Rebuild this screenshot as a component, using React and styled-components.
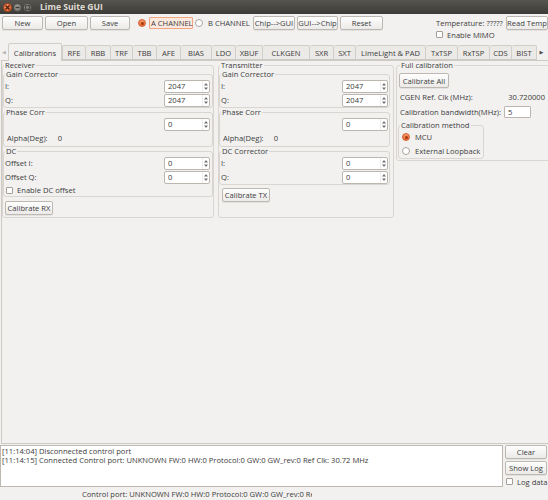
import styled, { createGlobalStyle } from "styled-components";

const Global = createGlobalStyle`
  html, body { margin: 0; padding: 0; }
  body {
    background: #f2f1f0;
    font-family: "Open Sans", "DejaVu Sans", sans-serif;
    font-size: 7.6px;
    color: #3c3c3c;
  }
  * { box-sizing: border-box; }
`;

const Window = styled.div`
  width: 548px;
  height: 500px;
  display: flex;
  flex-direction: column;
  overflow: hidden;
  background: #f2f1f0;
`;

const TitleBar = styled.div`
  height: 14px;
  flex: none;
  display: flex;
  align-items: center;
  padding-left: 3px;
  background: linear-gradient(#57554f, #3c3b37);
`;

const WinBtn = styled.span`
  width: 9px;
  height: 9px;
  border-radius: 50%;
  margin-right: 1px;
  display: flex;
  align-items: center;
  justify-content: center;
  border: 1px solid ${(p) => (p.$close ? "#b44214" : "#4d4c48")};
  background: ${(p) =>
    p.$close
      ? "radial-gradient(circle at 40% 35%, #f89c74, #e2531f)"
      : "radial-gradient(circle at 40% 35%, #9c9a95, #6f6d68)"};
`;

const Title = styled.span`
  margin-left: 7px;
  color: #dfdbd2;
  font-weight: bold;
  font-size: 8.6px;
  line-height: 14px;
`;

const Toolbar = styled.div`
  height: 26px;
  flex: none;
  display: flex;
  align-items: flex-start;
  padding: 2px 0 0 2px;
`;

const Button = styled.button`
  height: ${(p) => p.$h || 14}px;
  width: ${(p) => p.$w}px;
  margin: 0 ${(p) => (p.$mr === undefined ? 2 : p.$mr)}px 0 ${(p) => p.$ml || 0}px;
  padding: 0;
  flex: none;
  border: 1px solid #bdb9b2;
  border-radius: 2px;
  background: linear-gradient(#fefefe, #ebeae8);
  box-shadow: 0 1px 0 rgba(0, 0, 0, 0.06);
  font: inherit;
  color: #3c3c3c;
  line-height: 12px;
  white-space: nowrap;
  overflow: hidden;
`;

const ChannelGroup = styled.div`
  display: flex;
  align-items: center;
  height: 12px;
  margin: 1px 0 0 6px;
`;

const RadioDot = styled.span`
  width: 8px;
  height: 8px;
  flex: none;
  border-radius: 50%;
  display: inline-flex;
  align-items: center;
  justify-content: center;
  margin-left: ${(p) => p.$ml || 0}px;
  border: 1px solid ${(p) => (p.$on ? "#d2602e" : "#a9a59f")};
  background: ${(p) => (p.$on ? "linear-gradient(#f6986c, #ea6a35)" : "#fff")};
  &::after {
    content: "";
    width: 3px;
    height: 3px;
    border-radius: 50%;
    background: ${(p) => (p.$on ? "#a33a12" : "transparent")};
  }
`;

const ChannelLabel = styled.span`
  margin: 0 ${(p) => p.$mr || 0}px 0 ${(p) => p.$ml || 3}px;
  height: 12px;
  line-height: 10px;
  padding: 0 1px;
  width: ${(p) => p.$w}px;
  border: 1px solid ${(p) => (p.$focus ? "#f1a47f" : "transparent")};
  background: ${(p) => (p.$focus ? "#fbe9df" : "transparent")};
  border-radius: 1px;
  white-space: nowrap;
`;

const Spacer = styled.div`
  flex: 1;
`;

const TempBlock = styled.div`
  display: flex;
  flex-direction: column;
  width: 112px;
  white-space: nowrap;
`;

const TempRow = styled.div`
  display: flex;
  align-items: center;
  justify-content: space-between;
  height: 14px;
`;

const CheckRow = styled.label`
  display: flex;
  align-items: center;
  height: ${(p) => p.$h || 9}px;
  margin-left: ${(p) => p.$ml || 0}px;
  gap: 4px;
  white-space: nowrap;
`;

const CheckBox = styled.span`
  width: 7px;
  height: 7px;
  flex: none;
  border: 1px solid #a39f98;
  border-radius: 1px;
  background: #fff;
`;

const TabBar = styled.div`
  height: 20px;
  flex: none;
  display: flex;
  align-items: flex-end;
  position: relative;
  z-index: 1;
`;

const ScrollArrow = styled.span`
  width: ${(p) => p.$w}px;
  height: 15px;
  line-height: 15px;
  font-size: 5px;
  color: ${(p) => (p.$dim ? "#b8b5b0" : "#4a4a4a")};
  text-align: center;
  flex: none;
`;

const Tab = styled.div`
  width: ${(p) => p.$w}px;
  height: ${(p) => (p.$active ? 18 : 15)}px;
  margin-bottom: ${(p) => (p.$active ? -1 : 0)}px;
  flex: none;
  display: flex;
  align-items: center;
  justify-content: center;
  white-space: nowrap;
  border: 1px solid #d1cec9;
  border-bottom: ${(p) => (p.$active ? "none" : "1px solid #cdc9c3")};
  border-left: ${(p) => (p.$first || p.$active ? "1px solid #d1cec9" : "none")};
  border-radius: 2px 2px 0 0;
  background: ${(p) => (p.$active ? "#f2f1f0" : "#eceae7")};
  padding-top: ${(p) => (p.$active ? 1 : 0)}px;
`;

const Pane = styled.div`
  flex: 1;
  margin-left: 1px;
  border-top: 1px solid #cdc9c3;
  border-left: 1px solid #cdc9c3;
  border-bottom: 1px solid #cdc9c3;
  overflow: hidden;
`;

const Columns = styled.div`
  display: flex;
  align-items: flex-start;
`;

const Group = styled.fieldset`
  margin: ${(p) => p.$m || 0};
  padding: ${(p) => p.$pad || "0"};
  border: 1px solid #d9d6d1;
  border-radius: 3px;
  min-width: 0;
  flex: none;
  width: ${(p) => (p.$w ? `${p.$w}px` : "auto")};
  align-self: ${(p) => (p.$stretch ? "stretch" : "auto")};
`;

const Legend = styled.legend`
  padding: 0 1px;
  margin-left: 1px;
  line-height: 9px;
  font-size: 7.6px;
`;

const Row = styled.div`
  display: flex;
  align-items: center;
  justify-content: ${(p) => (p.$start ? "flex-start" : "space-between")};
  gap: ${(p) => p.$gap || 0}px;
  height: ${(p) => p.$h || 14}px;
  padding: 0 ${(p) => p.$pr || 0}px 0 ${(p) => p.$pl || 1}px;
  white-space: nowrap;
`;

const SpinWrap = styled.div`
  width: 46px;
  height: 13px;
  flex: none;
  display: flex;
  align-items: center;
  background: #fff;
  border: 1px solid #bbb7b0;
  border-radius: 2px;
`;

const SpinText = styled.span`
  flex: 1;
  padding-left: 3px;
`;

const SpinArrows = styled.span`
  width: 7px;
  height: 11px;
  display: flex;
  align-items: center;
  justify-content: center;
  border-left: 1px solid #eeedeb;
`;

const TextInput = styled.div`
  width: 27px;
  height: 12px;
  line-height: 10px;
  padding-left: 3px;
  background: #fff;
  border: 1px solid #bbb7b0;
  border-radius: 1px;
`;

const ButtonRow = styled.div`
  display: flex;
  margin: ${(p) => p.$m};
`;

const Bottom = styled.div`
  height: 43px;
  flex: none;
  display: flex;
  padding-top: 1px;
`;

const LogBox = styled.div`
  flex: 1;
  background: #fff;
  border: 1px solid #bdb9b2;
  padding: 1px 1px 0;
  line-height: 8.5px;
  white-space: nowrap;
  overflow: hidden;
`;

const LogSide = styled.div`
  width: 43px;
  margin-left: 2px;
  flex: none;
  display: flex;
  flex-direction: column;
  gap: 2px;
`;

const StatusBar = styled.div`
  height: 13px;
  flex: none;
  display: flex;
  align-items: center;
  padding-left: 82px;
`;

const StatusText = styled.span`
  width: 230px;
  white-space: nowrap;
  overflow: hidden;
`;

const Spin = ({ value }) => (
  <SpinWrap>
    <SpinText>{value}</SpinText>
    <SpinArrows>
      <svg width="4" height="9" viewBox="0 0 4 9">
        <path d="M0 3.5 L2 1 L4 3.5Z M0 5.5 L2 8 L4 5.5Z" fill="#707070" />
      </svg>
    </SpinArrows>
  </SpinWrap>
);

const tabs = [
  ["Calibrations", 54],
  ["RFE", 24],
  ["RBB", 25],
  ["TRF", 22],
  ["TBB", 24],
  ["AFE", 24],
  ["BIAS", 31],
  ["LDO", 24],
  ["XBUF", 27],
  ["CLKGEN", 47],
  ["SXR", 24],
  ["SXT", 22],
  ["LimeLight & PAD", 70],
  ["TxTSP", 32],
  ["RxTSP", 32],
  ["CDS", 22],
  ["BIST", 25],
];

function GainAndPhase({ pr }) {
  return (
    <>
      <Group>
        <Legend>Gain Corrector</Legend>
        <Row $pr={pr}>
          <span>I:</span>
          <Spin value="2047" />
        </Row>
        <Row $pr={pr}>
          <span>Q:</span>
          <Spin value="2047" />
        </Row>
      </Group>
      <Group $pad="0 0 1px">
        <Legend>Phase Corr</Legend>
        <Row $pr={pr}>
          <span />
          <Spin value="0" />
        </Row>
        <Row $start $gap={10} $pl={3}>
          <span>Alpha(Deg):</span>
          <span>0</span>
        </Row>
      </Group>
    </>
  );
}

function App() {
  return (
    <Window>
      <Global />
      <TitleBar>
        <WinBtn $close>
          <svg width="5" height="5" viewBox="0 0 5 5">
            <path d="M0.5 0.5 L4.5 4.5 M4.5 0.5 L0.5 4.5" stroke="#4a1b08" strokeWidth="1.2" />
          </svg>
        </WinBtn>
        <WinBtn>
          <svg width="5" height="5" viewBox="0 0 5 5">
            <path d="M0.5 2.5 H4.5" stroke="#3a3935" strokeWidth="1.2" />
          </svg>
        </WinBtn>
        <WinBtn>
          <svg width="5" height="5" viewBox="0 0 5 5">
            <rect x="0.7" y="0.7" width="3.6" height="3.6" fill="none" stroke="#3a3935" strokeWidth="1" />
          </svg>
        </WinBtn>
        <Title>Lime Suite GUI</Title>
      </TitleBar>

      <Toolbar>
        <Button $w={41}>New</Button>
        <Button $w={43}>Open</Button>
        <Button $w={40}>Save</Button>
        <ChannelGroup>
          <RadioDot $on />
          <ChannelLabel $focus $w={44}>A CHANNEL</ChannelLabel>
          <RadioDot $ml={2} />
          <ChannelLabel $w={46} $mr={1}>B CHANNEL</ChannelLabel>
        </ChannelGroup>
        <Button $w={42}>Chip--&gt;GUI</Button>
        <Button $w={41}>GUI--&gt;Chip</Button>
        <Button $w={43}>Reset</Button>
        <Spacer />
        <TempBlock>
          <TempRow>
            <span>Temperature: ?????</span>
            <Button $w={42} $mr={0}>Read Temp</Button>
          </TempRow>
          <CheckRow $h={9}>
            <CheckBox />
            <span>Enable MIMO</span>
          </CheckRow>
        </TempBlock>
      </Toolbar>

      <TabBar>
        <ScrollArrow $w={8} $dim>◀</ScrollArrow>
        {tabs.map(([name, w], i) => (
          <Tab key={name} $w={w} $active={i === 0} $first={i === 1}>
            {name}
          </Tab>
        ))}
        <ScrollArrow $w={9}>▶</ScrollArrow>
      </TabBar>

      <Pane>
        <Columns>
          <Group $w={212} $stretch $pad="0 0 2px">
            <Legend>Receiver</Legend>
            <GainAndPhase pr={2} />
            <Group>
              <Legend>DC</Legend>
              <Row $pr={2}>
                <span>Offset I:</span>
                <Spin value="0" />
              </Row>
              <Row $pr={2}>
                <span>Offset Q:</span>
                <Spin value="0" />
              </Row>
              <CheckRow $h={12} $ml={2}>
                <CheckBox />
                <span>Enable DC offset</span>
              </CheckRow>
            </Group>
            <ButtonRow $m="4px 0 0 2px">
              <Button $w={48}>Calibrate RX</Button>
            </ButtonRow>
          </Group>

          <Group $w={176} $stretch $m="0 0 0 4px" $pad="0 3px 2px 0">
            <Legend>Transmitter</Legend>
            <GainAndPhase pr={1} />
            <Group>
              <Legend>DC Corrector</Legend>
              <Row $pr={1}>
                <span>I:</span>
                <Spin value="0" />
              </Row>
              <Row $pr={1}>
                <span>Q:</span>
                <Spin value="0" />
              </Row>
            </Group>
            <ButtonRow $m="3px 0 0 3px">
              <Button $w={48}>Calibrate TX</Button>
            </ButtonRow>
          </Group>

          <Group $w={160} $m="0 0 0 2px" $pad="0 10px 1px 2px">
            <Legend>Full calibration</Legend>
            <ButtonRow $m="3px 0 1px 0">
              <Button $w={50} $h={15}>Calibrate All</Button>
            </ButtonRow>
            <Row $h={15} $pl={0}>
              <span>CGEN Ref. Clk (MHz):</span>
              <span>30.720000</span>
            </Row>
            <Row $h={15} $pl={0} $start $gap={3}>
              <span>Calibration bandwidth(MHz):</span>
              <TextInput>5</TextInput>
            </Row>
            <Group $w={86} $m="2px 0 0 -1px">
              <Legend>Calibration method</Legend>
              <Row $start $gap={5} $pl={3}>
                <RadioDot $on />
                <span>MCU</span>
              </Row>
              <Row $start $gap={5} $pl={3}>
                <RadioDot />
                <span>External Loopback</span>
              </Row>
            </Group>
          </Group>
        </Columns>
      </Pane>

      <Bottom>
        <LogBox>
          <div>[11:14:04] Disconnected control port</div>
          <div>
            [11:14:15] Connected Control port: UNKNOWN FW:0 HW:0 Protocol:0 GW:0 GW_rev:0 Ref Clk: 30.72 MHz
          </div>
        </LogBox>
        <LogSide>
          <Button $w={42} $mr={0}>Clear</Button>
          <Button $w={42} $mr={0}>Show Log</Button>
          <CheckRow $h={9} $ml={1}>
            <CheckBox />
            <span>Log data</span>
          </CheckRow>
        </LogSide>
      </Bottom>

      <StatusBar>
        <StatusText>Control port: UNKNOWN FW:0 HW:0 Protocol:0 GW:0 GW_rev:0 Ref Clk: 30.72 MHz</StatusText>
      </StatusBar>
    </Window>
  );
}

export default App;
